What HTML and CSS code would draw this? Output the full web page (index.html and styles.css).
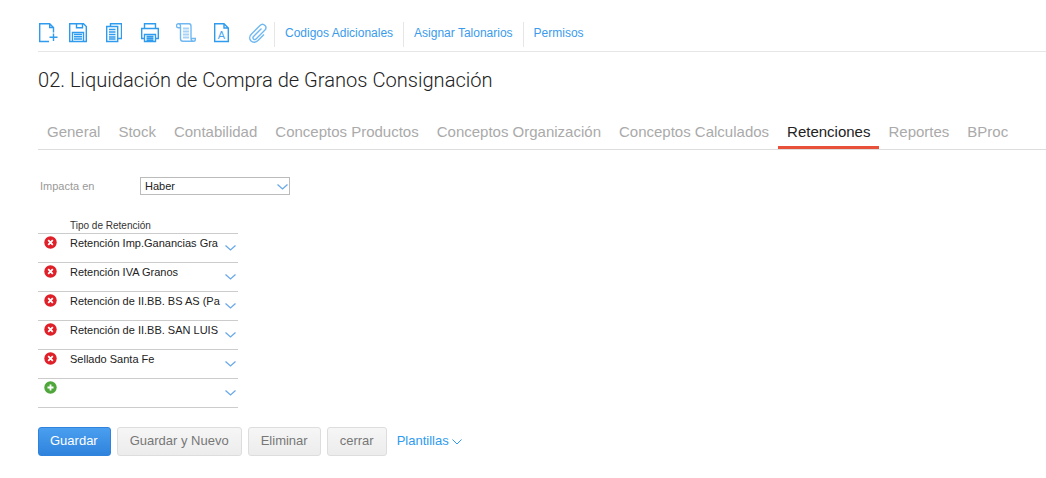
FILE: index.html
```html
<!DOCTYPE html>
<html lang="es">
<head>
    <meta charset="UTF-8">
    <title>Liquidación de Compra de Granos Consignación</title>
    <link rel="stylesheet" href="styles.css">
</head>
<body>
    <div class="toolbar">
        <div class="tool-icons">
            <svg class="icon i-new" width="19" height="20" viewBox="0 0 19 20"><path d="M10 18.500H.7V.7h10l3.800 3.800v5M10.700.7v3.800h3.800M14.500 10.500v7.500M10.500 14.200h8"/></svg>
            <svg class="icon i-save" width="18" height="20" viewBox="0 0 18 20"><path d="M.7.7h13.800l2.800 2.800v15H.7zM7.500.7v4h6v-4M3.500 18.500v-9h11v9M5 11.500h8M5 13.700h8M5 16h8"/></svg>
            <svg class="icon i-copy" width="16" height="20" viewBox="0 0 16 20"><path d="M4.500 3V.7h11v14.800h-3.500M.7 3.500h11v15H.7zM3 6.500h6.500M3 9h6.500M3 11.500h6.500M3 14h6.500M3 16h6.500"/></svg>
            <svg class="icon i-print" width="18" height="20" viewBox="0 0 18 20"><path d="M3.500 5.500V.7h11v4.800M3.500 15.500H.7v-10h16.600v10h-2.800M3.500 11.500h11v7h-11zM5.500 13.500h7M5.500 15.200h7M5.500 17h7"/></svg>
            <svg class="icon icon-light i-scroll" width="20" height="20" viewBox="0 0 20 20"><rect class="bar" x="7" y="4.500" width="6" height="2"/><rect class="bar" x="7" y="7.500" width="6" height="2"/><rect class="bar" x="7" y="10.500" width="6" height="2"/><rect class="bar" x="7" y="13.500" width="6" height="2"/><path d="M2.500.7H13c1.500 0 2 1 2 2.500V15c0 2 1 3.300 2.500 3.300H7c-1.500 0-2.500-1-2.500-2.800V3.500C4.500 1.500 3.500.7 2.500.7 1 .7.500 1.700.500 2.700c0 1 .5 2 1.700 2h2.300M15 15.500h4.300v1c0 1.500-1 1.800-1.800 1.800"/></svg>
            <svg class="icon i-font" width="15" height="20" viewBox="0 0 15 20"><path d="M.7.7h9.300l4.300 4.300v13.500H.7zM10 .7V5h4.300"/><text class="icon-letter" x="7.500" y="15.500">A</text></svg>
            <svg class="icon icon-light i-clip" width="18" height="20" viewBox="0 0 18 20"><path d="M12.500 5.500l-8 8c-1 1-.5 2 0 2.500s1.500 1 2.500 0l8.500-8.500c2-2 2-3.500.5-5s-3.500-1.500-5 0L2.500 11c-2 2-2.500 5-.5 7s5 1.500 7-.5l6-6"/></svg>
        </div>
        <a class="tool-link" href="#">Codigos Adicionales</a>
        <a class="tool-link" href="#">Asignar Talonarios</a>
        <a class="tool-link" href="#">Permisos</a>
    </div>

    <h1 class="title">02. Liquidación de Compra de Granos Consignación</h1>

    <div class="tabs">
        <a class="tab" href="#">General</a>
        <a class="tab" href="#">Stock</a>
        <a class="tab" href="#">Contabilidad</a>
        <a class="tab" href="#">Conceptos Productos</a>
        <a class="tab" href="#">Conceptos Organización</a>
        <a class="tab" href="#">Conceptos Calculados</a>
        <a class="tab active" href="#">Retenciones</a>
        <a class="tab" href="#">Reportes</a>
        <a class="tab" href="#">BProc</a>
    </div>

    <div class="field">
        <label class="field-label">Impacta en</label>
        <div class="select">
            <span>Haber</span>
            <svg class="chev" width="11" height="6" viewBox="0 0 11 6"><path d="M.5.5l5 4.500 5-4.500"/></svg>
        </div>
    </div>

    <div class="grid">
        <div class="grid-head">Tipo de Retención</div>
        <div class="row">
            <svg class="status" width="13" height="13" viewBox="0 0 13 13"><circle class="red" cx="6.500" cy="6.500" r="6.200"/><path d="M4.200 4.200l4.600 4.600M8.800 4.200L4.200 8.800"/></svg>
            <div class="row-text">Retención Imp.Ganancias Gra</div>
            <svg class="chev" width="11" height="6" viewBox="0 0 11 6"><path d="M.5.5l5 4.500 5-4.500"/></svg>
        </div>
        <div class="row">
            <svg class="status" width="13" height="13" viewBox="0 0 13 13"><circle class="red" cx="6.500" cy="6.500" r="6.200"/><path d="M4.200 4.200l4.600 4.600M8.800 4.200L4.200 8.800"/></svg>
            <div class="row-text">Retención IVA Granos</div>
            <svg class="chev" width="11" height="6" viewBox="0 0 11 6"><path d="M.5.5l5 4.500 5-4.500"/></svg>
        </div>
        <div class="row">
            <svg class="status" width="13" height="13" viewBox="0 0 13 13"><circle class="red" cx="6.500" cy="6.500" r="6.200"/><path d="M4.200 4.200l4.600 4.600M8.800 4.200L4.200 8.800"/></svg>
            <div class="row-text">Retención de II.BB. BS AS (Pa</div>
            <svg class="chev" width="11" height="6" viewBox="0 0 11 6"><path d="M.5.5l5 4.500 5-4.500"/></svg>
        </div>
        <div class="row">
            <svg class="status" width="13" height="13" viewBox="0 0 13 13"><circle class="red" cx="6.500" cy="6.500" r="6.200"/><path d="M4.200 4.200l4.600 4.600M8.800 4.200L4.200 8.800"/></svg>
            <div class="row-text">Retención de II.BB. SAN LUIS</div>
            <svg class="chev" width="11" height="6" viewBox="0 0 11 6"><path d="M.5.5l5 4.500 5-4.500"/></svg>
        </div>
        <div class="row">
            <svg class="status" width="13" height="13" viewBox="0 0 13 13"><circle class="red" cx="6.500" cy="6.500" r="6.200"/><path d="M4.200 4.200l4.600 4.600M8.800 4.200L4.200 8.800"/></svg>
            <div class="row-text">Sellado Santa Fe</div>
            <svg class="chev" width="11" height="6" viewBox="0 0 11 6"><path d="M.5.5l5 4.500 5-4.500"/></svg>
        </div>
        <div class="row">
            <svg class="status" width="13" height="13" viewBox="0 0 13 13"><circle class="green" cx="6.500" cy="6.500" r="6.200"/><path d="M6.500 3.500v6M3.500 6.500h6"/></svg>
            <div class="row-text"></div>
            <svg class="chev" width="11" height="6" viewBox="0 0 11 6"><path d="M.5.5l5 4.500 5-4.500"/></svg>
        </div>
    </div>

    <div class="actions">
        <button class="btn btn-primary">Guardar</button>
        <button class="btn">Guardar y Nuevo</button>
        <button class="btn">Eliminar</button>
        <button class="btn">cerrar</button>
        <a class="templates" href="#">Plantillas
            <svg class="chev-small" width="10" height="6" viewBox="0 0 10 6"><path d="M.5.5l4.500 4.500 4.500-4.500"/></svg>
        </a>
    </div>
</body>
</html>
```

FILE: styles.css
```css
body {
    font-family: "Liberation Sans", Arial, sans-serif;
    background: #fff;
    margin: 0;
    padding: 20px 0 0 38px;
    color: #333;
    overflow: hidden;
}

a {
    text-decoration: none;
}

/* toolbar */
.toolbar {
    display: flex;
    align-items: stretch;
    height: 31px;
    border-bottom: 1px solid #e6e6e6;
}

.tool-icons {
    display: flex;
    align-items: flex-start;
    padding-top: 3px;
    width: 236px;
}

.icon {
    fill: none;
    stroke: #2f9bee;
    stroke-width: 1.4;
}

.icon-light {
    stroke: #6fb8f2;
}

.icon .bar {
    fill: #a6d3f7;
    stroke: none;
}

.icon-letter {
    fill: #4aa6ef;
    stroke: none;
    font-size: 11px;
    text-anchor: middle;
}

.i-new { margin-left: 1px; }
.i-save { margin-left: 11px; }
.i-copy { margin-left: 19px; }
.i-print { margin-left: 19px; }
.i-scroll { margin-left: 17px; }
.i-font { margin-left: 18px; }
.i-clip { margin-left: 20px; }

.tool-link {
    font-size: 12px;
    color: #3a9bec;
    height: 25px;
    line-height: 23px;
    margin-top: 2px;
    padding: 0 10px;
    border-left: 1px solid #e6e6e6;
}

.title {
    font-family: Roboto, sans-serif;
    font-size: 20.1px;
    font-weight: 300;
    color: #222;
    margin: 16px 0 0;
    line-height: 24px;
}

/* tabs */
.tabs {
    display: flex;
    margin-top: 26px;
    height: 31px;
    border-bottom: 1px solid #ddd;
}

.tab {
    font-size: 15px;
    color: #aaa;
    padding: 0 9px;
    height: 28px;
    line-height: 28px;
}

.tab.active {
    color: #222;
    border-bottom: 3px solid #e8503a;
}

/* form */
.field {
    display: flex;
    align-items: center;
    margin-top: 27px;
    height: 18px;
}

.field-label {
    font-size: 11px;
    color: #999;
    width: 100px;
    margin-left: 2px;
}

.select {
    display: flex;
    align-items: center;
    justify-content: space-between;
    box-sizing: border-box;
    width: 150px;
    height: 18px;
    border: 1px solid #bbb;
    padding: 0 1px 0 4px;
    font-size: 11px;
    color: #222;
}

.select .chev {
    margin-top: 2px;
}

.chev {
    fill: none;
    stroke: #6aa9e9;
    stroke-width: 1.3;
    flex: none;
}

/* grid */
.grid {
    width: 200px;
    margin-top: 24px;
}

.grid-head {
    font-size: 10px;
    color: #333;
    padding-left: 32px;
    height: 14px;
    line-height: 14px;
    border-bottom: 1px solid #ccc;
}

.row {
    display: flex;
    align-items: flex-start;
    height: 28px;
    border-bottom: 1px solid #ccc;
}

.status {
    flex: none;
    margin: 2px 0 0 6px;
    stroke: #fff;
    stroke-width: 1.8;
    fill: none;
}

.status .red {
    fill: #df2029;
    stroke: none;
}

.status .green {
    fill: #4fa73c;
    stroke: none;
}

.row-text {
    font-size: 11px;
    color: #222;
    width: 148px;
    margin: 3px 0 0 13px;
    line-height: 13px;
    white-space: nowrap;
}

.row .chev {
    margin: 11px 0 0 7px;
}

/* buttons */
.actions {
    display: flex;
    align-items: center;
    gap: 6px;
    margin-top: 19px;
}

.btn {
    font-family: "Liberation Sans", Arial, sans-serif;
    font-size: 13px;
    height: 29px;
    padding: 0 12px 2px;
    color: #777;
    background: linear-gradient(#f6f6f6, #ececec);
    border: 1px solid #ddd;
    border-radius: 3px;
}

.btn-primary {
    color: #fff;
    padding: 0 12px 2px 11px;
    background: linear-gradient(#4a9ff0, #2f83dc);
    border-color: #2f83dc;
}

.templates {
    font-size: 13px;
    color: #2f9bee;
    margin: 0 0 2px 4px;
}

.chev-small {
    fill: none;
    stroke: #2f9bee;
    stroke-width: 1;
}
```
